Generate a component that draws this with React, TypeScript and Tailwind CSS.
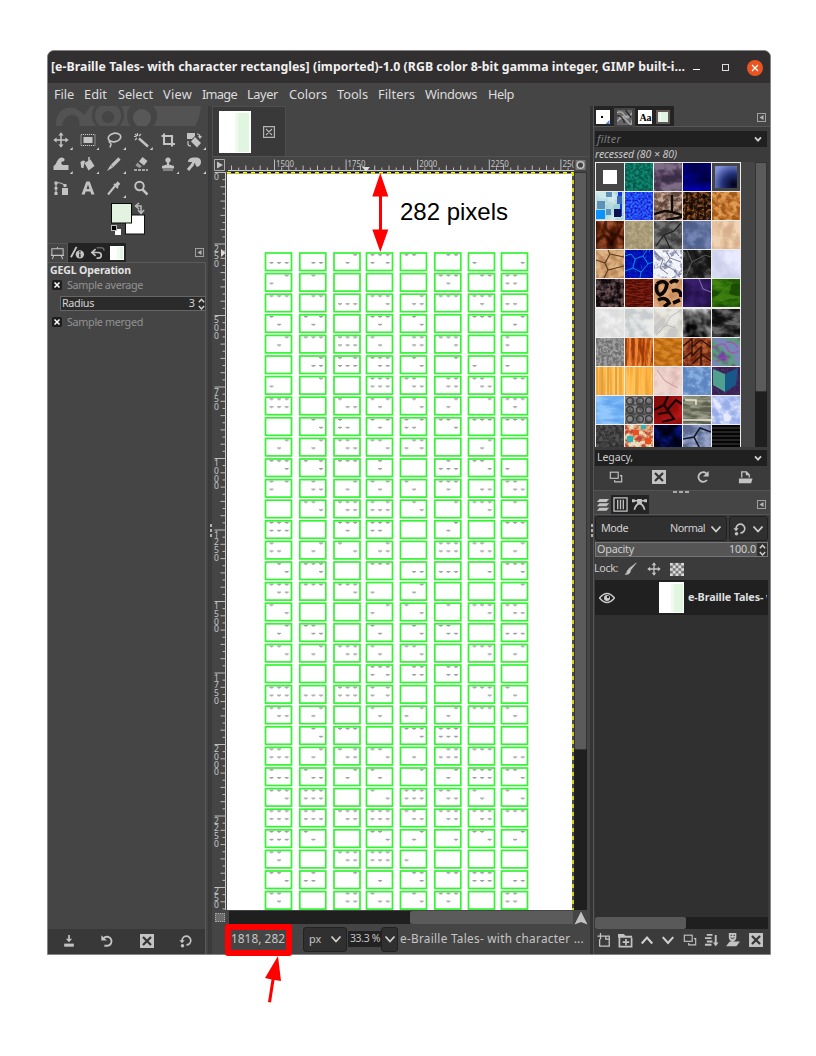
import React, { useLayoutEffect, useRef } from 'react';

/** Text whose tracking is adjusted so that the line is exactly `w` pixels wide. */
function Fit({ w, children, className = '' }: { w: number; children: string; className?: string }) {
  const ref = useRef<HTMLSpanElement>(null);
  useLayoutEffect(() => {
    const el = ref.current;
    if (!el) return;
    el.style.letterSpacing = '0px';
    const natural = el.getBoundingClientRect().width;
    el.style.letterSpacing = `${(w - natural) / children.length}px`;
  }, [w, children]);
  return <span ref={ref} className={`inline-block shrink-0 whitespace-pre ${className}`}>{children}</span>;
}

const G = '#c3c3c3';

function Icon({ children, s = 16, className = '' }: { children: React.ReactNode; s?: number; className?: string }) {
  return (
    <svg width={s} height={s} viewBox="0 0 16 16" fill="none" stroke={G} strokeWidth="1.5" className={`block shrink-0 ${className}`}>
      {children}
    </svg>
  );
}

const MoveGlyph = () => (
  <>
    <path d="M8 2V14M2 8H14" />
    <path d="M8 .3L10.6 3.6H5.4ZM8 15.7L10.6 12.4H5.4ZM.3 8L3.6 5.4V10.6ZM15.7 8L12.4 5.4V10.6Z" fill={G} stroke="none" />
  </>
);

const tools: { g: React.ReactNode; more: boolean }[] = [
  { g: <MoveGlyph />, more: true },
  { g: <><rect x="1" y="2.5" width="14" height="11" strokeWidth="1" strokeDasharray="1.2 .8" /><rect x="3.5" y="5" width="9" height="6" fill={G} stroke="none" /></>, more: true },
  { g: <><ellipse cx="8.5" cy="5.5" rx="6.300" ry="4.200" transform="rotate(-12 8.5 5.5)" strokeWidth="1.700" /><path d="M4 8.500C1.500 11 5.500 10 5 12.500S3.500 14 4.500 15.500" /></>, more: true },
  { g: <><path d="M6 6.500L15 14.500" strokeWidth="2.500" /><path d="M4.500 1V4M1 4.500H3.500M2 2L4 4M8 2L6 4M2 8L4 6" strokeWidth="1.200" /></>, more: true },
  { g: <path d="M4 1.500V12H15M1.500 4H12V14.500" strokeWidth="2.100" />, more: false },
  { g: <><path d="M1 1H9V4L6 7H1Z" fill={G} stroke="none" /><path d="M9 5L15 11L11 15.500L5 9.500Z" fill={G} stroke="none" /><path d="M11 2C13 2 14 3 14 5M12.500 4L14 6L15.500 4M2 9V12Q2 14 5 14" strokeWidth="1.200" /></>, more: true },
  { g: <path d="M.5 14V10C4 9 3.500 2 8.500 1.500C12 1.500 12.500 5 10 5.500C8 5 7.500 8 10 9H15.500V14Z" fill={G} stroke="none" />, more: true },
  { g: <><path d="M4.500 7L10.500 3.500L14.500 10L8.500 14.500Z" fill={G} stroke="none" /><path d="M9 8V1M5 6C1 4 1 7 2 11" /><path d="M.5 6Q4 4 4.500 7L3.500 12H1.500Z" fill={G} stroke="none" /></>, more: true },
  { g: <><path d="M6 10L13.500 2.500" strokeWidth="3.200" /><path d="M4.500 9L7 11.500L1 15Z" fill={G} stroke="none" /></>, more: true },
  { g: <><path d="M9.500 1L14.500 5L11 9.500L6 5.500Z" fill={G} stroke="none" /><path d="M4.500 6.500L9 10.500L6.500 12L2.500 9.500Z" fill="#999" stroke="none" /><path d="M1 14H15" strokeDasharray="3 1" /></>, more: false },
  { g: <><circle cx="8" cy="4" r="2.600" fill={G} stroke="none" /><path d="M7 5H9V8.500L14 10V12.500H2V10L7 8.500Z" fill={G} stroke="none" /><path d="M3 14H13" strokeWidth="1" /></>, more: true },
  { g: <><path d="M2 6Q2 2 7 1.500H11Q15 2 15 6Q15 10 11 11L9.500 9L9 7L7 9H5L6 6Z" fill={G} stroke="none" /><path d="M7 8L2 14" strokeWidth="2.800" /></>, more: true },
  { g: <><path d="M3 3V13M3 3Q9 2 11 5" strokeWidth="1.200" /><path d="M1.500 1.500H4.500V4.500H1.500ZM1.500 7H4.500V9.500H1.500ZM1.500 12H4.500V15H1.500ZM9 8H15V15H9ZM10.500 4H13.500V7H10.500Z" fill={G} stroke="none" /></>, more: false },
  { g: <path d="M1.500 14.500L6.300 1.500H9.700L14.500 14.500H11.300L10.300 11.500H5.700L4.700 14.500ZM6.500 9H9.500L8 4.500Z" fill={G} stroke="none" />, more: false },
  { g: <><path d="M2 14.500L9 6" strokeWidth="2" /><path d="M8 4L12 8" strokeWidth="1.800" /><path d="M10 6L13 2.500" strokeWidth="3.500" /></>, more: true },
  { g: <><circle cx="6.500" cy="6" r="4.300" strokeWidth="1.900" /><path d="M9.500 9.500L14.500 14.500" strokeWidth="2.500" /></>, more: false },
];

const Chevron = ({ s = 12, up = false }: { s?: number; up?: boolean }) => (
  <svg width={s} height={s} viewBox="0 0 12 12" className="block shrink-0">
    <path d={up ? 'M1.500 9L6 4L10.500 9' : 'M1.500 3.500L6 8.500L10.500 3.500'} fill="none" stroke="#d0d0d0" strokeWidth={s < 10 ? 2.600 : 1.800} />
  </svg>
);

const TabMenu = () => (
  <svg width="9" height="9" viewBox="0 0 9 9" className="block shrink-0">
    <rect x=".5" y=".5" width="8" height="8" fill="none" stroke="#a0a0a0" />
    <path d="M6.500 2V7L2.500 4.500Z" fill="#b5b5b5" />
  </svg>
);

const Thumb = ({ className }: { className: string }) => (
  <div className={`flex shrink-0 justify-end bg-white ${className}`}>
    <div className="mt-[8%] mr-[5%] mb-[3%] w-[46%] border-l-[3px] border-[#f0fbf0] bg-[#e0f6e0]" />
  </div>
);

const DeleteGlyph = () => (
  <>
    <rect x="1" y="1" width="14" height="14" fill={G} stroke="none" />
    <path d="M4 4L12 12M12 4L4 12" stroke="#333" strokeWidth="2.200" />
  </>
);

const DuplicateGlyph = () => (
  <>
    <rect x="1.500" y="2.500" width="9" height="7" strokeWidth="1.300" />
    <path d="M12.500 6.500H14.500V13.500H6.500V11.500" strokeWidth="1.300" />
  </>
);

const ResetGlyph = () => (
  <>
    <path d="M3.500 8A5 5 0 1 1 8.500 12.500" strokeWidth="1.900" />
    <path d="M.5 7H6.500L3.500 10.500Z" fill={G} stroke="none" />
    <circle cx="4" cy="13.500" r="2" fill={G} stroke="none" />
  </>
);

/* ---------- Left dock ---------- */

function Toolbox() {
  return (
    <div className="h-[137px]">
      <svg width="160" height="20" viewBox="0 0 160 20" className="block">
        <path d="M8 20C7-1 27-3 36 9L43 0H153C152 9 150 15 147 20H31C35 8 17 2 14 20Z" fill="#535353" />
        <circle cx="60" cy="9" r="16" fill="#454545" />
        <circle cx="60" cy="10" r="13" fill="#535353" />
        <circle cx="60" cy="11" r="6" fill="#454545" />
        <circle cx="94" cy="10" r="15" fill="#454545" />
        <circle cx="94" cy="12" r="9" fill="#585858" />
      </svg>
      <div className="grid grid-cols-[repeat(6,26.700px)] grid-rows-[repeat(3,24px)] pt-[2px]">
        {tools.map((t, i) => (
          <div key={i} className="relative flex items-center justify-center pr-[1px]">
            <Icon>{t.g}</Icon>
            {t.more && <span className="absolute right-[2px] bottom-[2px] h-[3px] w-[3px] bg-[#cfcfcf] [clip-path:polygon(100%_0,100%_100%,0_100%)]" />}
          </div>
        ))}
      </div>
      <svg width="50" height="37" viewBox="0 0 50 37" className="mt-[-2px] ml-[58px] block">
        <rect x="19.500" y="17" width="19" height="19" fill="#fff" stroke="#111" />
        <rect x="5.500" y="5.500" width="20" height="19.500" fill="#e2f3e2" stroke="#080808" />
        <path d="M30 8H35V14M33 5L29.500 8L33 11M32 12L35 15.500L38 12" fill="none" stroke="#b5b5b5" strokeWidth="1.600" />
        <rect x="9" y="31" width="6" height="6" fill="#fff" />
        <rect x="5.500" y="27.500" width="5" height="5" fill="#000" stroke="#bbb" />
      </svg>
    </div>
  );
}

function Check({ label, w }: { label: string; w: number }) {
  return (
    <div className="flex h-[14px] items-center gap-[5px] pl-[4px] text-[10.800px] text-[#929292]">
      <span className="flex h-[10px] w-[10px] items-center justify-center rounded-[2px] bg-[#1d1d1d]">
        <svg width="6" height="6" viewBox="0 0 6 6"><path d="M.5.5L5.500 5.500M5.500.5L.5 5.500" stroke="#fff" strokeWidth="1.500" /></svg>
      </span>
      <Fit w={w}>{label}</Fit>
    </div>
  );
}

function LeftDock() {
  return (
    <div className="flex w-[161px] shrink-0 flex-col border-r border-[#393939] bg-[#454545]">
      <Toolbox />
      <div className="flex h-[19px] items-stretch">
        <div className="flex w-[20px] items-center justify-center border-t border-r border-[#565656]">
          <Icon s={15}><path d="M2 3H14V10H2ZM1 10H15M4 10L2.500 14M12 10L13.500 14M8 1V3" strokeWidth="1.100" /></Icon>
        </div>
        <div className="flex w-[58px] items-center justify-around bg-[#232323]">
          <Icon s={15}><path d="M1 13L7 2" strokeWidth="2" /><circle cx="10.500" cy="10" r="4.500" fill={G} stroke="none" /><path d="M10.500 9V13M10.500 6.500V8" stroke="#222" /></Icon>
          <Icon s={15}><path d="M7 3H12Q15 3 15 6" stroke="#666" /><path d="M3 8H9Q12 8 12 11T9 14H7M6 4.500L2 8L6 11.500" strokeWidth="1.800" /></Icon>
          <Thumb className="h-[14px] w-[14px]" />
        </div>
        <div className="ml-auto flex items-center pr-[4px]"><TabMenu /></div>
      </div>
      <div className="mr-[2px] flex grow flex-col border-t border-r border-[#5a5a5a]">
        <div className="pl-[2px] text-[10.500px] leading-[15px] font-bold text-[#e2e2e2]"><Fit w={81}>GEGL Operation</Fit></div>
        <Check label="Sample average" w={76} />
        <div className="mt-[4px] ml-[12px] flex h-[15px] w-[146px] items-center border border-[#666] bg-[#2b2b2b] pl-[1px] text-[10.800px] text-[#d5d5d5]">
          <Fit w={32}>Radius</Fit>
          <span className="mr-[3px] ml-auto">3</span>
          <span className="flex flex-col"><Chevron s={7} up /><Chevron s={7} /></span>
        </div>
        <div className="mt-[4px]"><Check label="Sample merged" w={76} /></div>
        <div className="grow" />
        <div className="flex h-[25px] items-center bg-[#383838] pb-[2px] pl-[14px]">
          <div className="flex w-[131px] items-center justify-between">
            <Icon s={14}><path d="M8 1V7" strokeWidth="2" /><path d="M4.500 5.500H11.500L8 9.500Z" fill={G} stroke="none" /><path d="M2.500 11H13.500V14.500H2.500Z" fill={G} stroke="none" /></Icon>
            <Icon s={14}><path d="M5 13.500H8.500A5.200 5.200 0 1 0 4 5" strokeWidth="2.200" /><path d="M1.500 1.500V7.500H8Z" fill={G} stroke="none" /></Icon>
            <Icon s={16}><DeleteGlyph /></Icon>
            <Icon s={14}><ResetGlyph /></Icon>
          </div>
        </div>
      </div>
    </div>
  );
}

/* ---------- Canvas ---------- */

// One entry per cell: first digit is the upper dot mask, second digit the lower one (4 = left, 2 = middle, 1 = right).
const braille: string[] = [
  '07 03 12 75 60 30 04 01', '14 20 00 00 00 72 30 66', '70 30 07 71 13 70 72 06', '42 52 00 72 21 00 70 12',
  '12 70 77 42 33 71 00 44', '00 13 57 73 21 10 04 04', '04 10 00 77 63 33 63 30', '77 00 43 52 21 12 10 72',
  '00 21 46 52 56 61 70 70', '12 12 63 61 35 00 12 00', '71 51 70 22 00 27 61 04', '54 23 12 52 42 72 03 63',
  '00 61 73 57 21 10 71 20', '77 00 72 76 00 12 00 70', '46 12 41 13 00 77 63 12', '21 71 00 70 03 07 01 71',
  '73 70 71 04 12 00 00 10', '41 00 00 14 41 20 71 63', '12 63 00 42 21 63 00 07', '61 12 73 42 61 00 71 12',
  '00 00 00 75 33 33 00 00', '77 07 77 55 00 00 71 42', '63 12 00 42 14 12 70 42', '00 21 70 00 71 77 00 00',
  '67 12 53 61 02 37 70 03', '47 43 12 42 10 12 77 61', '71 77 00 41 77 63 42 41', '77 67 73 77 63 73 73 70',
  '77 42 00 61 12 01 61 12', '62 00 73 77 04 00 00 00', '61 26 10 02 31 30 77 03', '62 00 33 43 21 72 00 66',
];
const colX = [38, 72.300, 106.500, 139, 173, 207.300, 241, 274];

function Page() {
  return (
    <svg width="347" height="738" viewBox="0 0 347 738" className="block bg-white">
      {braille.map((row, r) =>
        row.split(' ').map((code, c) => {
          const y = 81 + r * 20.600;
          const x = colX[c];
          const dots: React.ReactNode[] = [];
          [Number(code[0]), Number(code[1])].forEach((m, line) =>
            [4, 2, 1].forEach((bit, k) => {
              if (m & bit)
                dots.push(
                  <g key={`${line}${k}`} fill="#777">
                    <rect x={x + 4.500 + k * 7.600} y={y + 1.100 + line * 7.900} width="4" height="1.100" opacity=".7" />
                    <rect x={x + 5.500 + k * 7.600} y={y + 2.100 + line * 7.900} width="2" height="1" opacity=".5" />
                  </g>,
                );
            }),
          );
          return (
            <g key={`${r}-${c}`}>
              <rect x={x + 0.500} y={y} width="26" height="17.500" fill="none" stroke="#10f010" strokeOpacity=".85" strokeWidth="1.700" />
              {dots}
            </g>
          );
        }),
      )}
      <path d="M0 .75H347M346 0V738" stroke="#111" strokeWidth="1.500" />
      <path d="M0 .75H346" stroke="#ffff00" strokeWidth="1.500" strokeDasharray="4 4" />
      <path d="M346 0V738" stroke="#ffff00" strokeWidth="1.500" strokeDasharray="4 4" />
    </svg>
  );
}

function HRuler() {
  const ticks = Array.from({ length: 48 }, (_, i) => i - 6);
  return (
    <svg width="347" height="14" viewBox="0 0 347 14" className="block shrink-0">
      <path d="M1 12.500H347" stroke="#d0d0d0" />
      {ticks.map((i) => {
        const x = 47.500 + i * 7.160;
        const h = i % 10 === 0 ? 11 : i % 2 === 0 ? 5 : 3;
        return <path key={i} d={`M${x} ${12.500 - h}V12.500`} stroke="#bdbdbd" />;
      })}
      {['1500', '1750', '2000', '2250', '25('].map((t, i) => (
        <text key={i} x={49 + i * 71.600} y="9" fontSize="8.800" textLength={i === 4 ? 11.500 : 18} lengthAdjust="spacingAndGlyphs" fill="#c4c4c4" fontFamily="Noto Sans, sans-serif">{t}</text>
      ))}
      <path d="M135 9H143L139 13.500Z" fill="#ddd" />
    </svg>
  );
}

function VRuler() {
  return (
    <svg width="15" height="738" viewBox="0 0 15 738" className="block shrink-0">
      <path d="M13.500 0V738" stroke="#d0d0d0" />
      {Array.from({ length: 104 }, (_, i) => {
        const w = i % 10 === 0 ? 11 : i % 2 === 0 ? 5 : 3;
        return <path key={i} d={`M${13.500 - w} ${0.500 + i * 7.150}H13.500`} stroke="#bdbdbd" />;
      })}
      {Array.from({ length: 11 }, (_, i) => (
        <text key={i} fontSize="8.500" fill="#c8c8c8" fontFamily="Noto Sans, sans-serif">
          {String(i * 250).split('').slice(0, i === 10 ? 3 : 4).map((d, k) => (
            <tspan key={k} x="2" y={Math.round((i === 10 ? 7 : 8) + i * 71.500 + k * (i === 10 ? 7 : 7.800))}>{d}</tspan>
          ))}
        </text>
      ))}
      <path d="M9 77V85L13.500 81Z" fill="#ddd" />
    </svg>
  );
}

function CanvasArea() {
  return (
    <div className="flex w-[378px] shrink-0 flex-col">
      <div className="flex h-[51px] border-b border-[#525252]">
        <div className="flex w-[74px] items-center border-t border-r border-l border-[#4e4e4e] bg-[#393939] pl-[6px]">
          <Thumb className="h-[42px] w-[32px]" />
          <svg width="12" height="12" viewBox="0 0 12 12" className="ml-[12px] block">
            <path d="M.6.6H11.400V11.400H.6ZM3 3L9 9M9 3L3 9" fill="none" stroke="#b5b5b5" strokeWidth="1.200" />
          </svg>
        </div>
        <div className="grow" />
      </div>
      <div className="flex h-[15px] items-end">
        <svg width="15" height="14" viewBox="0 0 15 14" className="block shrink-0">
          <path d="M2.500 1.500H12.500V12.500H2.500Z" fill="none" stroke="#aaa" /><path d="M5 3.500L11 7L5 10.500Z" fill="#c3c3c3" />
        </svg>
        <HRuler />
        <svg width="14" height="14" viewBox="0 0 14 14" className="block shrink-0">
          <rect x="1.500" y="2" width="10" height="10" fill="#777" /><circle cx="6.500" cy="7" r="3.300" fill="#444" stroke="#c3c3c3" strokeWidth="1.500" />
        </svg>
      </div>
      <div className="flex h-[738px]">
        <VRuler />
        <Page />
        <div className="w-[13px] bg-[#1f1f1f]">
          <div className="h-[578px] rounded-b-[2px] border border-[#333] bg-[#5b5b5b]" />
        </div>
      </div>
      <div className="flex h-[15px] items-center">
        <div className="ml-[3px] h-[9px] w-[10px] border border-dotted border-[#aaa] bg-[#6c6c6c]" />
        <div className="ml-[4px] flex h-[13px] w-[344px] justify-end bg-[#1f1f1f]">
          <div className="w-[163px] rounded-l-[2px] bg-[#5b5b5b]" />
        </div>
        <svg width="14" height="14" viewBox="0 0 14 14" className="ml-[1px] block"><path d="M7 .5L13.500 13.500L7 11L.5 13.500Z" fill="#c3c3c3" /></svg>
      </div>
      <div className="flex h-[28px] items-center text-[11.800px] text-[#c6c6c6]">
        <Fit w={54} className="ml-[19px]">1818, 282</Fit>
        <div className="ml-[18px] flex h-[25px] w-[44px] items-center justify-between rounded-[3px] border border-[#222] bg-[#303030] pr-[4px] pl-[5px] text-[10.800px]">
          <span>px</span><Chevron />
        </div>
        <div className="ml-[1px] flex h-[16px] w-[33px] items-center bg-[#222] pl-[2px] text-[10.500px]"><Fit w={30}>33.3 %</Fit></div>
        <div className="flex h-[25px] w-[17px] items-center justify-center rounded-[3px] border border-[#222] bg-[#303030]"><Chevron /></div>
        <Fit w={184} className="ml-[2px]">e-Braille Tales- with character ...</Fit>
      </div>
    </div>
  );
}

/* ---------- Patterns ---------- */

type Swatch = { c: string[]; f: string; t?: 'turbulence' | 'fractalNoise'; extra?: React.ReactNode; plain?: string };

const swatches: Swatch[] = [
  { c: [], f: '', plain: '#454545', extra: <rect x="7" y="7" width="14" height="14" fill="#fff" /> },
  { c: ['#075a4c', '#087060', '#108a70'], f: '.35' },
  { c: ['#3c3048', '#584560', '#7e6c86'], f: '.1' },
  { c: ['#000040', '#000070', '#0000b0'], f: '.02 .05' },
  { c: [], f: '', plain: '#454545', extra: <rect x="3" y="3" width="22" height="22" fill="url(#blueFade)" /> },
  { c: ['#9ed0d8', '#b8dce0', '#cfe8ea'], f: '.1', extra: <><path d="M1 9H9V17H1ZM10 0H16V5H10ZM10 17H15V23H10Z" fill="#5d91b8" /><path d="M0 18H9V27H0Z" fill="#0a92ff" /><path d="M22 0H26V4H22ZM24 12H26V24H24Z" fill="#1236e0" /><path d="M21 4H26V12H21Z" fill="#4068b8" /><path d="M18 17H25V25H18Z" fill="#101050" /></> },
  { c: ['#1720c8', '#2446f0', '#3070ff'], f: '.5' },
  { c: ['#5c463c', '#8a6a5c', '#c4a896'], f: '.2', extra: <path d="M0 22L11 19L18 20V3M18 20L28 23M12 28L28 25" fill="none" stroke="#100c0a" strokeWidth="2.500" /> },
  { c: ['#140a06', '#4a2a14', '#905428'], f: '.3 .3', extra: <path d="M4 0V9M9 4V18M15 0V12M22 8V28M3 16V28M15 18V28M0 11H12M12 16H28M18 5H28" stroke="#1a0c06" strokeWidth="1.500" /> },
  { c: ['#a05a1c', '#c87a34', '#e09c54'], f: '.2' },
  { c: ['#1c0400', '#5a2008', '#b0603c'], f: '.05 .04', extra: <path d="M0 22Q8 10 12 18T26 4M10 0Q6 10 20 14T28 24" stroke="#260800" strokeWidth="3" fill="none" opacity=".6" /> },
  { c: ['#9c9070', '#aa9c78', '#bcac88'], f: '.2' },
  { c: ['#3c3c3c', '#545454', '#747474'], f: '.12', extra: <path d="M2 25L10 14L20 10L27 2M10 14L16 27" stroke="#1e1e1e" fill="none" strokeWidth="1.200" /> },
  { c: ['#50608c', '#6272a0', '#7486b4'], f: '.09' },
  { c: ['#d8b090', '#e4c09c', '#f0d4b4'], f: '.09' },
  { c: ['#b8885c', '#cc9c6c', '#deb484'], f: '.15', extra: <path d="M0 10L9 13L14 4L28 7M9 13L12 20L28 16M12 20L8 28M14 4L12 0" stroke="#5c3a20" fill="none" strokeWidth="1.100" /> },
  { c: ['#0060ff', '#0010b0', '#0008a0', '#0018c0'], f: '.09', t: 'turbulence', extra: <path d="M0 6L6 4L10 9L18 6L22 0M10 9L8 18L0 21M18 6L23 14L28 12M8 18L16 22L23 14M16 22L15 28" stroke="#0090e8" fill="none" strokeWidth="1" /> },
  { c: ['#9094b0', '#d8dce8', '#fafaff', '#f0f2fa'], f: '.15', extra: <path d="M1 3L9 9L6 18L14 24M12 1L16 8L27 12M16 8L11 15L20 20L26 27M20 0L25 6" stroke="#606478" strokeWidth=".8" fill="none" /> },
  { c: ['#141414', '#242424', '#606060'], f: '.09', extra: <path d="M4 0L9 12L3 26M9 12L22 5L28 7" stroke="#787878" strokeWidth=".6" fill="none" /> },
  { c: ['#ccd0ea', '#d8dcf4', '#e8eaff'], f: '.05' },
  { c: ['#100a0c', '#302428', '#6a5050'], f: '.2' },
  { c: ['#4c0c06', '#641408', '#802418'], f: '.15 .7' },
  { c: ['#c88c5c', '#d89c6c', '#e0a878'], f: '.1', extra: <><path d="M3 5Q9 0 13 5Q12 13 6 16Q1 13 3 5M16 4Q20 0 24 3M18 12Q27 9 27 18M4 21Q12 17 15 24L10 28M19 24L26 21" fill="none" stroke="#0a0604" strokeWidth="3.600" /><circle cx="8" cy="8" r="2" fill="#e0a878" /></> },
  { c: ['#180c34', '#281450', '#38206c'], f: '.04', extra: <path d="M16 0L20 10L28 13" stroke="#a898c8" fill="none" strokeWidth=".7" /> },
  { c: ['#1c4c04', '#2c6c0a', '#448414'], f: '.06 .1', extra: <path d="M0 21L20 3L17 15L28 18L9 22Z" fill="#448812" opacity=".6" /> },
  { c: ['#dcdcdc', '#e4e4e4', '#f0f0f0'], f: '.1' },
  { c: ['#c8cccc', '#dde0e0', '#ececec'], f: '.09' },
  { c: ['#c8c8c8', '#dcd8cc', '#e8e8e4'], f: '.08', extra: <path d="M2 26L12 16L16 8L27 1M12 16L22 19" stroke="#a8acb0" strokeWidth=".7" fill="none" /> },
  { c: ['#000', '#888', '#fff'], f: '.035' },
  { c: ['#101010', '#303030', '#686868'], f: '.06 .12' },
  { c: ['#707070', '#888', '#a0a0a0'], f: '.35' },
  { c: ['#a03c0c', '#c85c14', '#e8883c'], f: '.3 .05' },
  { c: ['#b46410', '#c87418', '#d88828'], f: '.12 .25' },
  { c: ['#6c2814', '#8c3c1c', '#b05c30'], f: '.2', extra: <path d="M0 8L9 1V18L18 9V27M9 9L18 2L28 9M0 21L9 14M18 16L28 23M9 26L18 18" stroke="#34100a" fill="none" strokeWidth="1.400" /> },
  { c: ['#7044a4', '#58a070', '#7888b8'], f: '.06', extra: <path d="M1 10Q12 2 15 10T27 13M3 24Q15 15 16 24M14 4Q23 3 26 10" stroke="#b044a4" fill="none" strokeWidth="1.500" opacity=".6" /> },
  { c: ['#f0a844', '#ffc050', '#ffcc68'], f: '.3 .01', extra: <path d="M1 0V28M6 0V28M12 0V28M20 0V28" stroke="#d08428" strokeWidth="1" /> },
  { c: ['#f0a438', '#ffb444', '#ffc45c'], f: '.35 .015' },
  { c: ['#dcb4b0', '#e8c8c4', '#f0d8d0'], f: '.06', extra: <path d="M3 3L11 14L24 21" stroke="#c88c8c" fill="none" strokeWidth=".8" /> },
  { c: ['#5c84c0', '#6890c8', '#88ace0'], f: '.15' },
  { c: ['#3a1c50', '#3a2458', '#483068'], f: '.4', extra: <><path d="M1 8L1 2L13 7V25L1 18Z" fill="#50a090" /><path d="M13 7L26 1L24 18L13 25Z" fill="#185888" /></> },
  { c: ['#64a4ec', '#74b4f4', '#94c8fc'], f: '.05 .15' },
  { c: ['#585858', '#707070', '#888888'], f: '.15', extra: <><path d="M0 0H28M0 9H28M0 18H28" stroke="#444" /><g fill="none" stroke="#383838" strokeWidth="1.300"><circle cx="5" cy="5" r="3.400" /><circle cx="15" cy="5" r="3.400" /><circle cx="24" cy="5" r="3.400" /><circle cx="5" cy="14" r="3.400" /><circle cx="15" cy="14" r="3.400" /><circle cx="24" cy="14" r="3.400" /><circle cx="5" cy="23" r="3.400" /><circle cx="15" cy="23" r="3.400" /><circle cx="24" cy="23" r="3.400" /></g></> },
  { c: ['#880c0c', '#9c1010', '#b81818'], f: '.04', extra: <path d="M0 14L10 9L14 0M10 9L20 23L8 26M14 13L22 4L28 8M4 18L16 16" stroke="#180404" strokeWidth="2.200" fill="none" /> },
  { c: ['#5c6050', '#808470', '#a0a08c'], f: '.06 .25', extra: <path d="M2 4H13V9M0 24H28" stroke="#ececdc" strokeWidth="1.500" fill="none" /> },
  { c: ['#98ace8', '#b8c8f4', '#e8ecff'], f: '.1' },
  { c: ['#303030', '#404040', '#545454'], f: '.3' },
  { c: ['#c04838', '#e0a070', '#e8e0c0'], f: '.18', extra: <><path d="M16 0H21V4H16ZM2 11H8V17H2Z" fill="#30b0b0" /><path d="M8 5H14V10H8ZM20 13H26V19H20Z" fill="#e85020" /></> },
  { c: ['#000014', '#000840', '#0c1880'], f: '.08' },
  { c: ['#5c6890', '#7888b0', '#98a4c8'], f: '.1', extra: <path d="M0 14L11 12L17 3L28 7M11 12L17 24" stroke="#141824" strokeWidth="1.600" fill="none" /> },
  { c: [], f: '', plain: '#050505', extra: <path d="M0 3H28M0 7H28M0 11H28M0 15H28M0 19H28" stroke="#444" /> },
];

const channel = (colors: string[], ch: number) =>
  colors.map((c) => {
    const h = c.length === 4 ? c.replace(/[0-9a-f]/gi, '$&$&') : c;
    return (parseInt(h.slice(1 + ch * 2, 3 + ch * 2), 16) / 255).toFixed(3);
  }).join(' ');

function PatternCell({ s, i }: { s: Swatch; i: number }) {
  const gain = s.t === 'turbulence' ? '3.500 0 0 0 -.1' : '3 0 0 0 -1';
  return (
    <svg width="28" height="28" viewBox="0 0 28 28" className="block">
      <defs>
        {i === 4 && <radialGradient id="blueFade" cx=".85" cy=".85" r="1"><stop offset="0" stopColor="#000014" /><stop offset=".5" stopColor="#223078" /><stop offset="1" stopColor="#8090d8" /></radialGradient>}
        {!s.plain && (
          <filter id={`n${i}`} x="0" y="0" width="1" height="1" colorInterpolationFilters="sRGB">
            <feTurbulence type={s.t ?? 'fractalNoise'} baseFrequency={s.f} numOctaves={4} seed={i + 3} />
            <feColorMatrix values={`${gain} ${gain} ${gain} 0 0 0 0 1`} />
            <feComponentTransfer>
              <feFuncR type="table" tableValues={channel(s.c, 0)} />
              <feFuncG type="table" tableValues={channel(s.c, 1)} />
              <feFuncB type="table" tableValues={channel(s.c, 2)} />
            </feComponentTransfer>
          </filter>
        )}
      </defs>
      <rect width="28" height="28" fill={s.plain ?? '#000'} filter={s.plain ? undefined : `url(#n${i})`} />
      {s.extra}
    </svg>
  );
}

/* ---------- Right dock ---------- */

function RightDock() {
  return (
    <div className="flex w-[178px] shrink-0 flex-col border-l border-[#555] bg-[#3b3b3b]">
      <div className="flex h-[21px] items-stretch border-b border-[#575757] bg-[#454545]">
        <div className="flex w-[80px] items-center justify-between bg-[#242424] pt-[2px] pr-[4px] pl-[2px]">
          <div className="flex h-[14px] w-[14px] items-center justify-center bg-white"><span className="ml-[4px] h-[2px] w-[2px] bg-black" /><span className="ml-[3px] h-[4px] w-[4px] self-end bg-[#5a7cd8] [clip-path:polygon(100%_0,100%_100%,0_100%)]" /></div>
          <div className="flex h-[19px] w-[21px] items-center justify-center bg-[#454545]">
            <Icon s={15}><rect width="16" height="16" fill="#666" stroke="none" /><path d="M0 3Q5 0 8 6T16 3M0 12Q6 5 11 12T16 11M2 8L14 6" stroke="#aaa" /><path d="M0 6Q6 6 8 14M9 0L15 8" stroke="#2c2c2c" /></Icon>
          </div>
          <div className="flex h-[14px] w-[14px] items-center justify-center bg-white font-['Liberation_Serif',serif] text-[10px] font-bold tracking-[-.3px] text-black">Aa</div>
          <div className="flex h-[14px] w-[14px] items-center justify-center border-2 border-[#625a58] bg-[#e2f5e2]"><span className="h-[8px] w-[6px] border-l border-white" /></div>
        </div>
        <div className="ml-auto flex items-center pt-[2px] pr-[5px]"><TabMenu /></div>
      </div>
      <div className="mt-[4px] ml-px flex h-[16px] w-[172px] items-center justify-between bg-[#202020] pr-[5px] pl-[2px] text-[11px] text-[#7c7c7c] italic">
        <Fit w={24}>filter</Fit><Chevron s={8} />
      </div>
      <div className="ml-px h-[15px] text-[10.500px] leading-[15px] text-[#cacaca] italic"><Fit w={82}>recessed (80 × 80)</Fit></div>
      <div className="ml-px flex h-[285px] overflow-hidden">
        <div className="grid h-[292px] w-[146px] shrink-0 grid-cols-[repeat(5,28px)] gap-[1.120px] border border-[#eee] bg-[#eee]">
          {swatches.map((s, i) => <PatternCell key={i} s={s} i={i} />)}
        </div>
        <div className="w-[14px] bg-[#454545]" />
        <div className="w-[12px] bg-[#1f1f1f]"><div className="h-[230px] rounded-b-[2px] border border-[#333] bg-[#5b5b5b]" /></div>
      </div>
      <div className="mt-[3px] ml-px flex h-[16px] w-[172px] items-center justify-between bg-[#202020] pr-[5px] pl-[2px] text-[10.500px] text-[#cfcfcf]">
        <Fit w={36}>Legacy,</Fit><Chevron s={8} />
      </div>
      <div className="flex h-[24px] items-center justify-between pr-[18px] pb-[2px] pl-[15px]">
        <Icon s={14}><DuplicateGlyph /></Icon>
        <Icon s={16}><DeleteGlyph /></Icon>
        <Icon s={14}><path d="M12.500 11.500A5.500 5.500 0 1 1 12.500 4.500" strokeWidth="2" /><path d="M14.500 1V7.500H8Z" fill={G} stroke="none" /></Icon>
        <Icon s={15}><path d="M1 14V9H13V14ZM13 9H15.500L14 14H12" fill={G} stroke="none" /><path d="M4 8V2H9L12 5V8M9 2V5H12" strokeWidth="1.400" /></Icon>
      </div>
      <div className="flex h-[5px] items-start justify-center gap-[2px] border-t border-[#555] bg-[#454545] pr-[4px]">
        <span className="h-[2px] w-[4px] bg-[#aaa]" /><span className="h-[2px] w-[4px] bg-[#aaa]" /><span className="h-[2px] w-[4px] bg-[#aaa]" />
      </div>
      <div className="flex h-[20px] items-stretch border-b border-[#555] bg-[#454545]">
        <div className="flex w-[17px] items-center justify-center"><Icon s={14}><path d="M4 1H15L12 4.500H1ZM4 6H15L12 9.500H1ZM4 11H15L12 14.500H1Z" fill={G} stroke="none" /></Icon></div>
        <div className="flex w-[38px] items-center justify-around bg-[#242424]">
          <Icon s={15}><path d="M1 1H15V15H1ZM5 3V13M8 3V13M11 3V13" strokeWidth="1.400" /></Icon>
          <Icon s={15}><path d="M1 4H15M2.500 13.500Q4 8 8 6.500Q12 8 13.500 13.500" strokeWidth="1.800" /><path d="M5.500 2H10.500V8H5.500ZM0 2.500H3V5.500H0ZM13 2.500H16V5.500H13Z" fill={G} stroke="none" /></Icon>
        </div>
        <div className="ml-auto flex items-center pr-[5px]"><TabMenu /></div>
      </div>
      <div className="mt-[1px] ml-px flex h-[25px] w-[173px] gap-[2px]">
        <div className="flex w-[132px] items-center rounded-[3px] border border-[#202020] bg-[#303030] pr-[4px] pl-[5px] text-[10.800px] text-[#d0d0d0]">
          <Fit w={27}>Mode</Fit><Fit w={35} className="ml-auto">Normal</Fit><span className="ml-[5px]"><Chevron s={12} /></span>
        </div>
        <div className="flex grow items-center justify-around rounded-[3px] border border-[#202020] bg-[#303030]"><Icon s={14}><ResetGlyph /></Icon><Chevron s={12} /></div>
      </div>
      <div className="mt-[1px] ml-px flex h-[15px] w-[173px] items-center border border-[#777] bg-[#555] pl-[1px] text-[10.800px] text-[#cfcfcf]">
        <Fit w={37}>Opacity</Fit><Fit w={27} className="mr-[1px] ml-auto">100.0</Fit>
        <span className="flex h-full w-[10px] flex-col items-center bg-[#303030]"><Chevron s={7} up /><Chevron s={7} /></span>
      </div>
      <div className="flex h-[23px] items-center text-[10.800px] text-[#cacaca]">
        <Fit w={24}>Lock:</Fit>
        <Icon s={14} className="ml-[6px]"><path d="M14 1L7 10L5 8ZM5.500 8.500L7.500 10.500Q6 15 1 14Q4 13 3.500 10Z" fill={G} strokeWidth=".6" /></Icon>
        <Icon s={14} className="ml-[9px]"><MoveGlyph /></Icon>
        <Icon s={14} className="ml-[9px]"><rect x="0" y="1" width="16" height="15" fill="#777" stroke="none" /><path d="M0 1H3.200V4H0ZM6.400 1H9.600V4H6.400ZM12.800 1H16V4H12.800ZM3.200 4H6.400V7H3.200ZM9.600 4H12.800V7H9.600ZM0 7H3.200V10H0ZM6.400 7H9.600V10H6.400ZM12.800 7H16V10H12.800ZM3.200 10H6.400V13H3.200ZM9.600 10H12.800V13H9.600ZM0 13H3.200V16H0ZM6.400 13H9.600V16H6.400ZM12.800 13H16V16H12.800Z" fill="#ddd" stroke="none" /></Icon>
      </div>
      <div className="ml-px flex w-[173px] grow flex-col overflow-hidden bg-[#303030]">
        <div className="flex h-[35px] items-center overflow-hidden bg-[#202020] text-[10.800px] font-bold text-[#dedede]">
          <svg width="16" height="12" viewBox="0 0 16 12" className="ml-[4px] block shrink-0"><path d="M.5 6Q8-3 15.500 6Q8 15 .5 6Z" fill="none" stroke="#ccc" strokeWidth="1.400" /><circle cx="8" cy="6" r="3" fill="#ccc" /><circle cx="9" cy="5" r="1.200" fill="#222" /></svg>
          <Thumb className="ml-[44px] h-[31px] w-[25px]" />
          <div className="ml-[4px] w-[79px] overflow-hidden"><Fit w={87}>e-Braille Tales- w</Fit></div>
        </div>
      </div>
      <div className="ml-px h-[12px] w-[173px] bg-[#1f1f1f]"><div className="h-[12px] w-[91px] rounded-[2px] bg-[#595959]" /></div>
      <div className="flex h-[25px] items-center justify-between pr-[7px] pb-[3px] pl-[3px]">
        <Icon s={14}><path d="M6 3.500H14V15H3V7M4 0V7M.5 3.500H7.500M10 3.500V7H14" /></Icon>
        <Icon s={15}><path d="M0 1H6L8 3H15V5H0Z" fill={G} stroke="none" /><path d="M1.500 4V14.500H14.500V5M8.500 6.500V13M5 9.800H12" strokeWidth="1.800" /></Icon>
        <Chevron s={14} up /><Chevron s={14} />
        <Icon s={14}><DuplicateGlyph /></Icon>
        <Icon s={15}><path d="M3 2H9M1 5.500H8M3 9H9M1 12.500H8M12.500 2V11" strokeWidth="2" /><path d="M9.500 10H15.500L12.500 14Z" fill={G} stroke="none" /></Icon>
        <Icon s={15}><path d="M3 0H11V5Q10 9 7 9Q4 9 3 5ZM0 14L4 9H15L11 14Z" fill={G} stroke="none" /><path d="M5 2.500H6.500M8 2.500H9.500M5 5Q7 7 9 5" stroke="#333" strokeWidth="1" /></Icon>
        <Icon s={16}><DeleteGlyph /></Icon>
      </div>
    </div>
  );
}

/* ---------- Window ---------- */

const menus: [string, number, number][] = [
  ['File', 20, 30], ['Edit', 23, 34], ['Select', 35, 45], ['View', 29, 39], ['Image', 35, 45], ['Layer', 31, 42],
  ['Colors', 38, 48], ['Tools', 31, 41], ['Filters', 37, 47], ['Windows', 52, 63], ['Help', 26, 30],
];

const Grip = () => (
  <div className="flex flex-col gap-[2px]">
    <span className="h-[3px] w-[2px] bg-[#b0b0b0]" /><span className="h-[3px] w-[2px] bg-[#b0b0b0]" /><span className="h-[3px] w-[2px] bg-[#b0b0b0]" />
  </div>
);

export default function App() {
  return (
    <div className="relative h-[1056px] w-[816px] overflow-hidden bg-white pt-[50px] pl-[47px] font-['Noto_Sans','Open_Sans',sans-serif]">
      <div className="flex h-[905px] w-[724px] flex-col overflow-hidden rounded-t-[7px] border border-[#858585] bg-[#454545]">
        <div className="flex h-[32px] shrink-0 items-center bg-[#322f30] pt-[1px] pl-[3px] text-[12.300px] font-bold text-[#f0f0f0]">
          <Fit w={634}>[e-Braille Tales- with character rectangles] (imported)-1.0 (RGB color 8-bit gamma integer, GIMP built-i...</Fit>
          <span className="mt-[3px] ml-[8px] h-[1px] w-[7px] bg-white" />
          <span className="ml-[22px] h-[7px] w-[7px] border border-[#ddd]" />
          <svg width="16" height="16" viewBox="0 0 16 16" className="ml-[18px] block"><circle cx="8" cy="8" r="8" fill="#e95420" /><path d="M5 5L11 11M11 5L5 11" stroke="#fff" strokeWidth="1.300" /></svg>
        </div>
        <div className="flex h-[23px] shrink-0 items-center pl-[6px] text-[12.800px] text-[#dcdcdc]">
          {menus.map(([t, w, p]) => (
            <div key={t} className="flex shrink-0" style={{ width: p }}><Fit w={w}>{t}</Fit></div>
          ))}
        </div>
        <div className="flex grow">
          <LeftDock />
          <div className="flex w-[3px] shrink-0 items-center justify-center bg-[#3b3b3b]"><Grip /></div>
          <CanvasArea />
          <div className="flex w-[3px] shrink-0 items-center justify-center bg-[#343434]"><Grip /></div>
          <RightDock />
        </div>
      </div>
      <div className="absolute top-[199px] left-[400px] font-['Liberation_Sans',sans-serif] text-[24px] leading-[26px] text-black"><Fit w={108}>282 pixels</Fit></div>
      <svg width="20" height="80" viewBox="0 0 20 80" className="absolute top-[173px] left-[371px]">
        <path d="M9.300 0L17.300 23.500H11V56.500H17.300L9.300 79L1.300 56.500H8V23.500H1.300Z" fill="#f00" />
      </svg>
      <div className="absolute top-[924px] left-[225px] h-[32px] w-[67px] rounded-[3px] border-[6px] border-[#f00]" />
      <svg width="24" height="50" viewBox="0 0 24 50" className="absolute top-[955px] left-[262px]">
        <path d="M16 1L19 26L12.500 25L9 47.500L6 47L9.500 24.500L3 23Z" fill="#f00" />
      </svg>
    </div>
  );
}
